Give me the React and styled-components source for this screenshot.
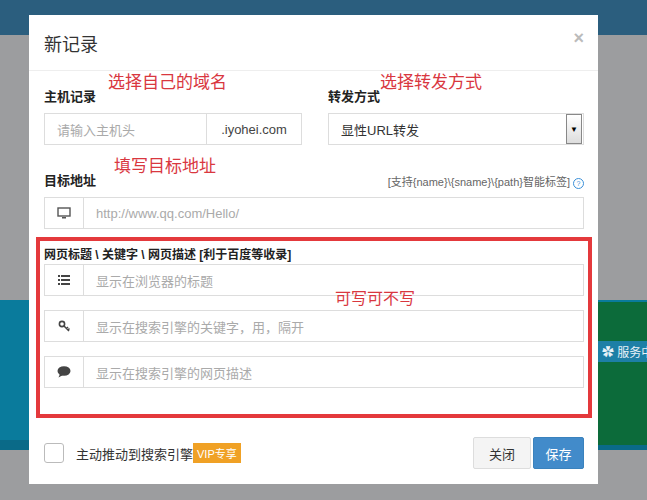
import React from "react";
import styled, { createGlobalStyle } from "styled-components";

const G = createGlobalStyle`
  body{margin:0;font-family:"Liberation Sans","Noto Sans CJK SC",sans-serif;}
`;
const Page = styled.div`
  position:relative;width:647px;height:500px;overflow:hidden;
  background:
    linear-gradient(#2b5e7e 0 35px, transparent 35px),
    linear-gradient(90deg, transparent 0 598px, #0c6b3a 598px) 0 302px/100% 143px no-repeat,
    linear-gradient(#0a7b9c 0 140px, #0a6a88 140px) 0 300px/100% 150px no-repeat,
    #9c9d9f;
`;
const Badge = styled.div`
  position:absolute;left:598px;top:341px;background:#1d7fa6;color:#e8f2f8;font-size:12px;padding:2px 4px;white-space:nowrap;
`;
const Modal = styled.div`
  position:absolute;left:29px;top:15px;width:569px;height:469px;background:#fff;box-sizing:border-box;
  display:flex;flex-direction:column;
`;
const Header = styled.div`
  height:55px;border-bottom:1px solid #eee;display:flex;align-items:center;justify-content:space-between;padding:0 14px 0 15px;
`;
const Title = styled.div`font-size:18px;color:#333;`;
const Close = styled.div`font-size:18px;color:#bbb;font-weight:bold;margin-top:-8px;`;
const Body = styled.div`padding:0 14px 0 15px;display:flex;flex-direction:column;`;
const Row2 = styled.div`display:flex;gap:26px;margin-top:10px;`;
const Col = styled.div`display:flex;flex-direction:column;width:${p=>p.w}px;`;
const LabelRow = styled.div`display:flex;align-items:flex-end;justify-content:space-between;height:24px;margin-bottom:8px;`;
const Label = styled.span`font-size:13px;font-weight:bold;color:#222;`;
const Note = styled.span`font-size:17px;color:#d9373f;margin-left:${p=>p.ml||0}px;position:relative;top:-12px;flex:1;`;
const Hint = styled.span`font-size:11px;color:#666;`;
const Q = styled.span`display:inline-block;width:9px;height:9px;border:1px solid #3a8fd8;border-radius:50%;font-size:7px;color:#3a8fd8;text-align:center;line-height:9px;margin-left:3px;`;
const Group = styled.div`display:flex;height:32px;border:1px solid #ddd;box-sizing:border-box;`;
const Input = styled.div`flex:1;display:flex;align-items:center;padding-left:${p=>p.pl||12}px;font-size:13px;color:${p=>p.c||"#aaa"};`;
const Addon = styled.div`width:${p=>p.w}px;border-${p=>p.side}:1px solid #ddd;display:flex;align-items:center;justify-content:center;font-size:13px;color:#444;`;
const Caret = styled.div`width:14px;height:28px;border:1px solid #888;background:linear-gradient(#fff,#ddd);display:flex;align-items:center;justify-content:center;margin-right:1px;font-size:8px;`;
const RedBox = styled.div`
  margin:8px -8px 0 -8px;border:4px solid #e4393c;padding:4px 4px 26px 4px;display:flex;flex-direction:column;gap:14px;position:relative;
`;
const SubTitle = styled.div`font-size:12px;font-weight:bold;color:#222;margin-bottom:-12px;`;
const Big = styled.div`position:absolute;left:295px;top:44px;font-size:16px;color:#d9373f;`;
const Footer = styled.div`margin-top:auto;height:62px;display:flex;align-items:center;padding:0 14px 0 15px;gap:8px;`;
const Check = styled.div`width:18px;height:18px;border:1px solid #bbb;border-radius:3px;margin-right:4px;`;
const CheckText = styled.span`font-size:13px;color:#333;`;
const Vip = styled.span`background:#f0a125;color:#fff;font-size:11px;padding:2px 4px;margin-left:-8px;`;
const Buttons = styled.div`margin-left:auto;display:flex;gap:2px;`;
const Btn = styled.button`
  height:32px;width:${p=>p.w}px;font-size:13px;border-radius:2px;font-family:inherit;
  border:1px solid ${p=>p.primary?"#3a82bd":"#ddd"};background:${p=>p.primary?"#428bca":"#f4f4f4"};color:${p=>p.primary?"#fff":"#333"};
`;

const Monitor = () => (<svg width="14" height="12" viewBox="0 0 14 12"><rect x="1" y="1" width="12" height="8" fill="none" stroke="#555" strokeWidth="1.4"/><rect x="5" y="10" width="4" height="1.5" fill="#555"/></svg>);
const List = () => (<svg width="12" height="10" viewBox="0 0 12 10" fill="#444"><rect y="0" width="2" height="2"/><rect x="3" y="0" width="9" height="2"/><rect y="4" width="2" height="2"/><rect x="3" y="4" width="9" height="2"/><rect y="8" width="2" height="2"/><rect x="3" y="8" width="9" height="2"/></svg>);
const Key = () => (<svg width="12" height="12" viewBox="0 0 12 12"><circle cx="4" cy="4" r="2.6" fill="none" stroke="#444" strokeWidth="1.6"/><path d="M6 6 L11 11 M8.5 8.5 L10 7 M10 10 L11.5 8.5" stroke="#444" strokeWidth="1.5"/></svg>);
const Bubble = () => (<svg width="14" height="12" viewBox="0 0 14 12"><ellipse cx="7" cy="5" rx="6.5" ry="4.8" fill="#444"/><path d="M3 8 L1.5 11.5 L6 9" fill="#444"/></svg>);

export default function App(){
  return (<Page><G/>
    <Badge>✿ 服务中</Badge>
    <Modal>
      <Header><Title>新记录</Title><Close>×</Close></Header>
      <Body>
        <Row2>
          <Col w={258}>
            <LabelRow><Label>主机记录</Label><Note ml={12}>选择自己的域名</Note></LabelRow>
            <Group><Input>请输入主机头</Input><Addon w={94} side="left">.iyohei.com</Addon></Group>
          </Col>
          <Col w={256}>
            <LabelRow><Label>转发方式</Label><Note ml={0}>选择转发方式</Note></LabelRow>
            <Group><Input c="#333">显性URL转发</Input><Caret>▼</Caret></Group>
          </Col>
        </Row2>
        <LabelRow style={{marginTop:20}}><Label>目标地址</Label><Note ml={18}>填写目标地址</Note><Hint>[支持{"{name}"}\{"{sname}"}\{"{path}"}智能标签]<Q>?</Q></Hint></LabelRow>
        <Group><Addon w={38} side="right"><Monitor/></Addon><Input>http://www.qq.com/Hello/</Input></Group>
        <RedBox>
          <SubTitle>网页标题 \ 关键字 \ 网页描述 [利于百度等收录]</SubTitle>
          <Group><Addon w={38} side="right"><List/></Addon><Input>显示在浏览器的标题</Input></Group>
          <Group><Addon w={38} side="right"><Key/></Addon><Input>显示在搜索引擎的关键字，用，隔开</Input></Group>
          <Group><Addon w={38} side="right"><Bubble/></Addon><Input>显示在搜索引擎的网页描述</Input></Group>
          <Big>可写可不写</Big>
        </RedBox>
      </Body>
      <Footer>
        <Check/><CheckText>主动推动到搜索引擎</CheckText><Vip>VIP专享</Vip>
        <Buttons><Btn w={58}>关闭</Btn><Btn w={51} primary>保存</Btn></Buttons>
      </Footer>
    </Modal>
  </Page>);
}
